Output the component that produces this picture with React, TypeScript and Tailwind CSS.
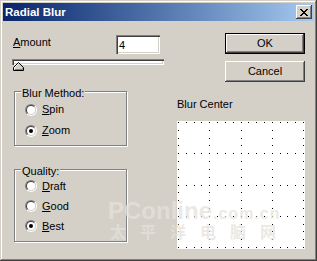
import type { ReactNode } from "react";

const raised =
  "shadow-[inset_-1px_-1px_#404040,inset_1px_1px_#ffffff,inset_-2px_-2px_#808080,inset_2px_2px_#d4d0c8]";
const sunken =
  "shadow-[inset_1px_1px_#808080,inset_2px_2px_#404040,inset_-1px_-1px_#ffffff,inset_-2px_-2px_#d4d0c8]";

// dotted guide lines of the blur-center box
const LINES = [0, 1, 2, 3, 4].map((i) => Math.round(1 + i * 31.25));
const STEPS = Array.from({ length: 17 }, (_, k) => Math.round(1 + k * 7.8125));
const DOTS = (() => {
  const seen = new Set<string>();
  const out: [number, number][] = [];
  for (const a of LINES) {
    for (const b of STEPS) {
      for (const [x, y] of [
        [b, a],
        [a, b],
      ]) {
        const key = `${x}-${y}`;
        if (!seen.has(key)) {
          seen.add(key);
          out.push([x, y]);
        }
      }
    }
  }
  return out;
})();

function Radio({ checked }: { checked?: boolean }) {
  return (
    <span className="block h-[12px] w-[12px] shrink-0 rounded-full border border-t-[#808080] border-l-[#808080] border-r-white border-b-white">
      <span className="flex h-[10px] w-[10px] items-center justify-center rounded-full border border-t-[#404040] border-l-[#404040] border-r-[#d4d0c8] border-b-[#d4d0c8] bg-white">
        {checked && <span className="h-[4px] w-[4px] rounded-full bg-black" />}
      </span>
    </span>
  );
}

function Option({ label, checked, h }: { label: string; checked?: boolean; h: string }) {
  return (
    <div className={`flex items-center gap-[5px] pl-[10px] ${h}`}>
      <Radio checked={checked} />
      <span>
        <span className="underline underline-offset-[1px]">{label[0]}</span>
        {label.slice(1)}
      </span>
    </div>
  );
}

function Group({ title, children, className }: { title: string; children: ReactNode; className: string }) {
  return (
    <fieldset
      className={`ml-[2px] w-[113px] border border-[#808080] shadow-[inset_1px_1px_#ffffff,1px_1px_#ffffff] ${className}`}
    >
      <legend className="relative top-[2px] ml-[6px] bg-[#d4d0c8] px-[1px] leading-[14px]">{title}</legend>
      {children}
    </fieldset>
  );
}

function CloseGlyph() {
  const rows = ["XX....XX", ".XX..XX.", "..XXXX..", "...XX...", "..XXXX..", ".XX..XX.", "XX....XX"];
  return (
    <svg width="8" height="7" viewBox="0 0 8 7" shapeRendering="crispEdges">
      {rows.flatMap((r, y) =>
        r.split("").map((c, x) => (c === "X" ? <rect key={`${x}-${y}`} x={x} y={y} width="1" height="1" fill="#000" /> : null))
      )}
    </svg>
  );
}

export default function App() {
  return (
    <div
      className={`relative flex h-[261px] w-[317px] flex-col bg-[#d4d0c8] p-[3px] font-['Liberation_Sans',Arial,sans-serif] text-[11px] leading-[13px] text-black shadow-[inset_-1px_-1px_#404040,inset_1px_1px_#d4d0c8,inset_-2px_-2px_#808080,inset_2px_2px_#ffffff]`}
    >
      {/* title bar */}
      <div className="flex h-[18px] items-center bg-gradient-to-r from-[#0a246a] to-[#a6caf0] pl-[2px] pr-[2px]">
        <span className="text-[11.5px] font-bold text-white">Radial Blur</span>
        <button className={`ml-auto flex h-[14px] w-[16px] items-center justify-center bg-[#d4d0c8] ${raised}`}>
          <CloseGlyph />
        </button>
      </div>

      <div className="flex flex-1 pl-[9px]">
        {/* left column */}
        <div className="flex w-[152px] flex-col">
          <div className="mt-[14px] flex items-start justify-between">
            <span className="mt-[1px] pl-[1px]">
              <span className="underline underline-offset-[1px]">A</span>mount
            </span>
            <div className={`mr-[4px] h-[19px] w-[44px] bg-white pl-[3px] pt-[4px] ${sunken}`}>4</div>
          </div>

          <div className="relative mt-[5px] h-[12px]">
            <div className={`h-[6px] w-full bg-white ${sunken}`} />
            <svg className="absolute left-[1px] top-[3px]" width="11" height="9" viewBox="0 0 11 9">
              <polygon points="0.5,5 5.5,0 10.5,5 10.5,8.5 0.5,8.5" fill="#d4d0c8" />
              <polyline points="1.5,8 1.5,5.5 5.5,1.5" fill="none" stroke="#ffffff" />
              <polyline points="5.5,0.5 10.5,5.5 10.5,8.5 0.5,8.5 0.5,5.5 5.5,0.5" fill="none" stroke="#000" />
              <polyline points="9.5,5.8 9.5,7.5 1.5,7.5" fill="none" stroke="#808080" />
            </svg>
          </div>

          <Group title="Blur Method:" className="mt-[13px] pb-[4px] pt-[1px]">
            <Option label="Spin" h="h-[21px]" />
            <Option label="Zoom" h="h-[21px]" checked />
          </Group>

          <Group title="Quality:" className="mt-[16px] pb-[5px]">
            <Option label="Draft" h="h-[20px]" />
            <Option label="Good" h="h-[20px]" />
            <Option label="Best" h="h-[20px]" checked />
          </Group>
        </div>

        {/* right column */}
        <div className="ml-[13px] flex w-[128px] flex-col">
          <div className="mt-[12px] flex flex-col items-end gap-[7px]">
            <button className="h-[21px] w-[80px] border border-black bg-[#d4d0c8] shadow-[inset_-1px_-1px_#404040,inset_1px_1px_#ffffff,inset_-2px_-2px_#808080]">
              OK
            </button>
            <button className={`h-[21px] w-[80px] bg-[#d4d0c8] ${raised}`}>Cancel</button>
          </div>
          <span className="mt-[16px]">Blur Center</span>
          <svg className="mt-[10px]" width="128" height="128" viewBox="0 0 128 128" shapeRendering="crispEdges">
            <rect width="128" height="128" fill="#fff" />
            {DOTS.map(([x, y]) => (
              <rect key={`${x}-${y}`} x={x} y={y} width="1" height="1" fill="#000" />
            ))}
          </svg>
        </div>
      </div>

      {/* faint site watermark lying over the dialog */}
      <div className="pointer-events-none absolute left-[108px] top-[200px] flex flex-col font-bold text-[rgba(228,226,220,0.75)]">
        <div className="flex h-[21px] items-baseline leading-[21px]">
          <span className="text-[24px]">PConline</span>
          <span className="ml-[1px] text-[16px] tracking-[1px]">.com.cn</span>
        </div>
        <div className="ml-[2px] mt-[1px] font-['Noto_Sans_CJK_SC',sans-serif] text-[16px] leading-[18px] tracking-[14px]">
          太平洋电脑网
        </div>
      </div>
    </div>
  );
}
